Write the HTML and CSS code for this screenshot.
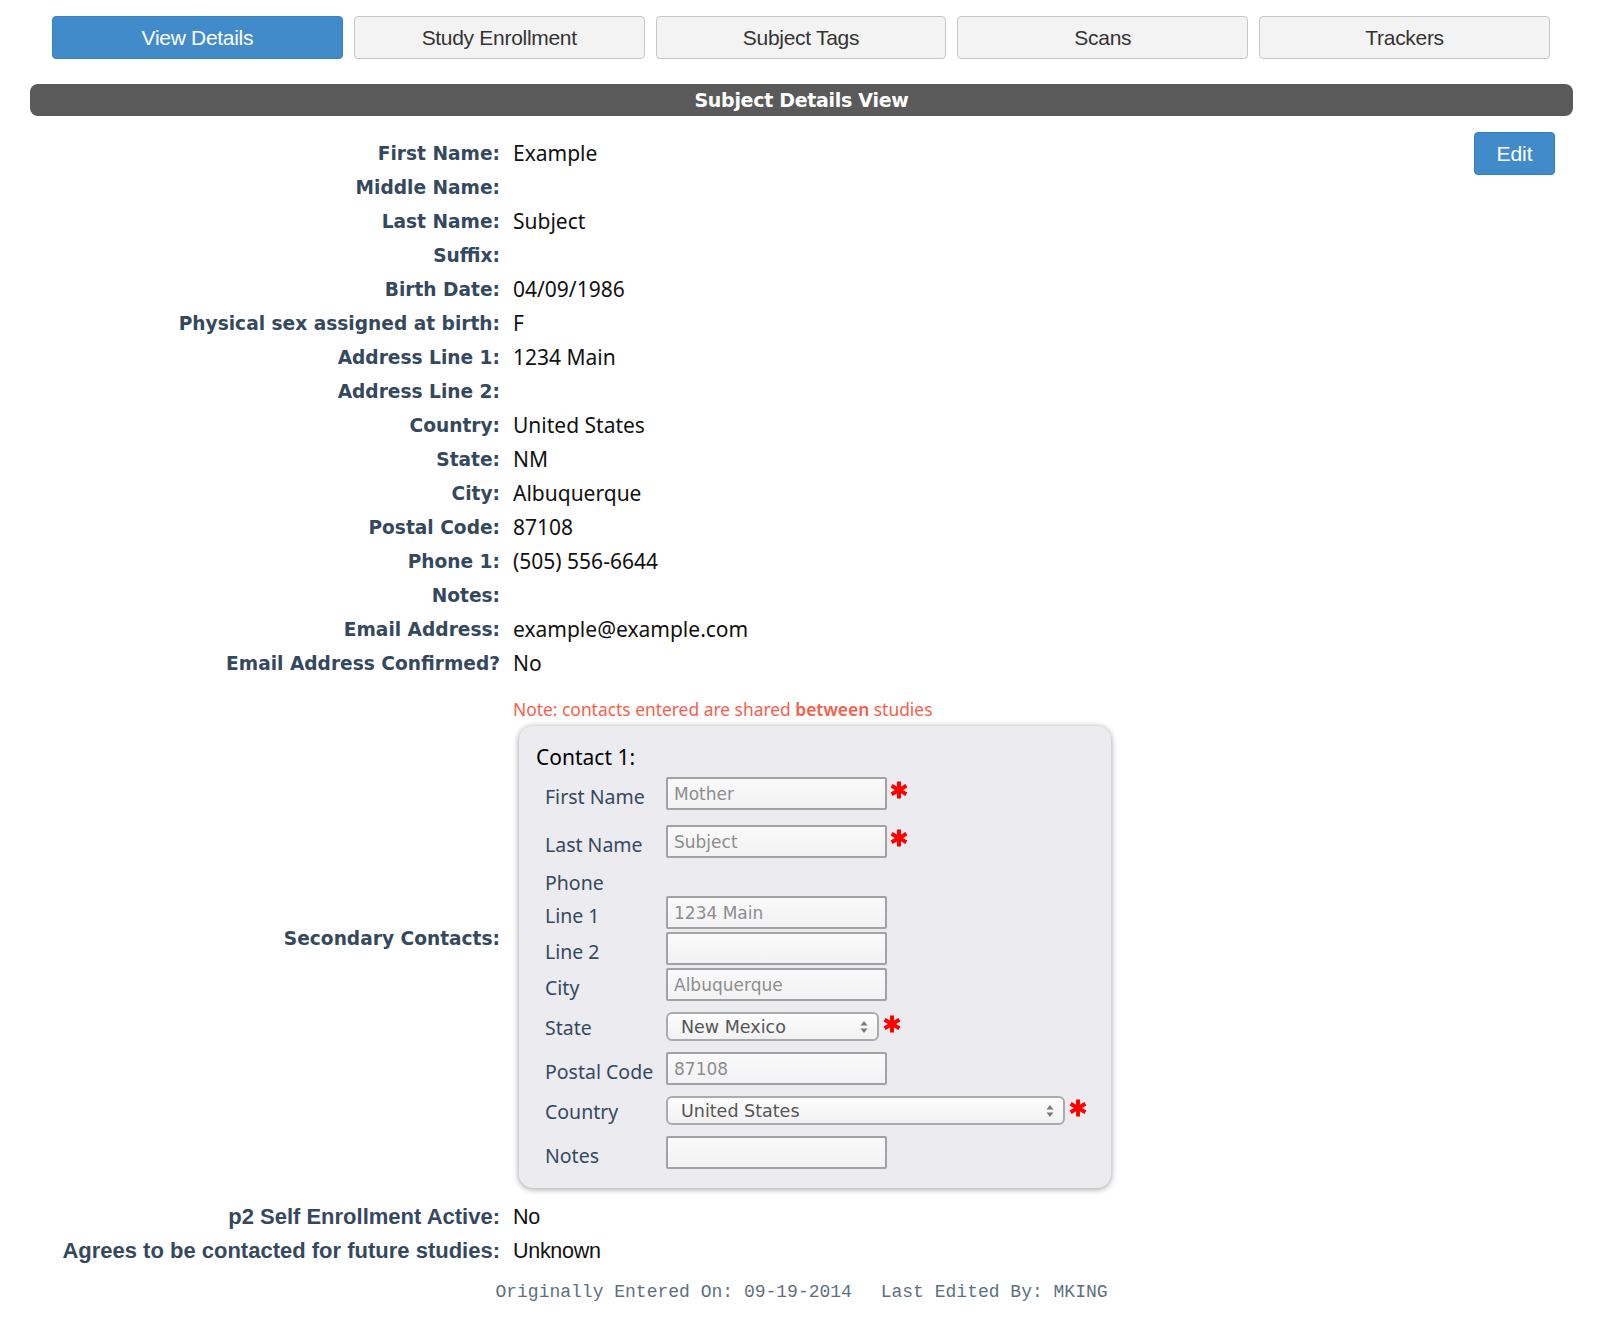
FILE: index.html
```html
<!DOCTYPE html>
<html lang="en">

<head>
    <meta charset="UTF-8">
    <meta name="viewport" content="width=device-width, initial-scale=1.0">
    <title>Subject Details</title>
    <link rel="stylesheet" href="styles.css">
</head>

<body>
<div class="page">

    <div class="tabs">
        <a href="#" class="tab active">View Details</a>
        <a href="#" class="tab">Study Enrollment</a>
        <a href="#" class="tab">Subject Tags</a>
        <a href="#" class="tab">Scans</a>
        <a href="#" class="tab">Trackers</a>
    </div>

    <div class="panel-head">Subject Details View</div>

    <div class="details">
        <dl class="fields">
            <dt>First Name:</dt><dd>Example</dd>
            <dt>Middle Name:</dt><dd></dd>
            <dt>Last Name:</dt><dd>Subject</dd>
            <dt>Suffix:</dt><dd></dd>
            <dt>Birth Date:</dt><dd>04/09/1986</dd>
            <dt>Physical sex assigned at birth:</dt><dd>F</dd>
            <dt>Address Line 1:</dt><dd>1234 Main</dd>
            <dt>Address Line 2:</dt><dd></dd>
            <dt>Country:</dt><dd>United States</dd>
            <dt>State:</dt><dd>NM</dd>
            <dt>City:</dt><dd>Albuquerque</dd>
            <dt>Postal Code:</dt><dd>87108</dd>
            <dt>Phone 1:</dt><dd>(505) 556-6644</dd>
            <dt>Notes:</dt><dd></dd>
            <dt>Email Address:</dt><dd>example@example.com</dd>
            <dt>Email Address Confirmed?</dt><dd>No</dd>

            <dt class="contacts-label">Secondary Contacts:</dt>
            <dd class="contacts">
                <p class="note">Note: contacts entered are shared <b>between</b> studies</p>
                <div class="contact">
                    <p class="contact-title">Contact 1:</p>

                    <div class="field first">
                        <label>First Name</label>
                        <input type="text" value="Mother" readonly>
                        <svg class="req" width="20" height="20" viewBox="0 0 20 20"><path d="M10 1.5v17M2.6 5.75l14.8 8.5M17.4 5.75l-14.8 8.5"/></svg>
                    </div>
                    <div class="field second">
                        <label>Last Name</label>
                        <input type="text" value="Subject" readonly>
                        <svg class="req" width="20" height="20" viewBox="0 0 20 20"><path d="M10 1.5v17M2.6 5.75l14.8 8.5M17.4 5.75l-14.8 8.5"/></svg>
                    </div>
                    <div class="field group">
                        <label>Phone</label>
                    </div>
                    <div class="field flush">
                        <label>Line 1</label>
                        <input type="text" value="1234 Main" readonly>
                    </div>
                    <div class="field tight">
                        <label>Line 2</label>
                        <input type="text" value="" readonly>
                    </div>
                    <div class="field tight">
                        <label>City</label>
                        <input type="text" value="Albuquerque" readonly>
                    </div>
                    <div class="field">
                        <label>State</label>
                        <div class="select state">
                            <span>New Mexico</span>
                            <svg width="8" height="14" viewBox="0 0 8 14"><path d="M4 1L7.5 5.5H0.5z M4 13L0.5 8.5H7.5z"/></svg>
                        </div>
                        <svg class="req sel" width="20" height="20" viewBox="0 0 20 20"><path d="M10 1.5v17M2.6 5.75l14.8 8.5M17.4 5.75l-14.8 8.5"/></svg>
                    </div>
                    <div class="field">
                        <label>Postal Code</label>
                        <input type="text" value="87108" readonly>
                    </div>
                    <div class="field">
                        <label>Country</label>
                        <div class="select country">
                            <span>United States</span>
                            <svg width="8" height="14" viewBox="0 0 8 14"><path d="M4 1L7.5 5.5H0.5z M4 13L0.5 8.5H7.5z"/></svg>
                        </div>
                        <svg class="req sel" width="20" height="20" viewBox="0 0 20 20"><path d="M10 1.5v17M2.6 5.75l14.8 8.5M17.4 5.75l-14.8 8.5"/></svg>
                    </div>
                    <div class="field">
                        <label>Notes</label>
                        <input type="text" value="" readonly>
                    </div>
                </div>
            </dd>

            <dt class="narrow">p2 Self Enrollment Active:</dt><dd class="narrow">No</dd>
            <dt class="narrow">Agrees to be contacted for future studies:</dt><dd class="narrow">Unknown</dd>
        </dl>

        <a href="#" class="btn-edit">Edit</a>
    </div>

    <p class="footer">
        <span>Originally Entered On: 09-19-2014</span>
        <span class="edited">Last Edited By: MKING</span>
    </p>

</div>
</body>

</html>
```

FILE: styles.css
```css
body {
    margin: 0;
    background: white;
}

.page {
    padding: 0 29px 0 30px;
}

/* tab bar */
.tabs {
    display: flex;
    gap: 11px;
    margin: 0 23px 0 22px;
    padding-top: 16px;
}
.tab {
    flex: 1;
    height: 41px;
    line-height: 42px;
    text-align: center;
    font-family: "Liberation Sans", Arial, sans-serif;
    font-size: 21px;
    letter-spacing: -0.3px;
    color: #333;
    text-decoration: none;
    background: #f3f3f3;
    border: 1px solid #c6c6c6;
    border-radius: 4px;
}
.tab.active {
    color: white;
    background: #428bca;
    border-color: #3a7fbe;
}

.panel-head {
    margin-top: 25px;
    height: 32px;
    line-height: 32px;
    text-align: center;
    background: #5a5a5a;
    color: white;
    border-radius: 8px;
    font-family: "DejaVu Sans", Verdana, sans-serif;
    font-weight: bold;
    font-size: 19px;
    letter-spacing: -0.3px;
}

/* details list */
.details {
    display: flex;
    align-items: flex-start;
    margin: 20px 18px 0 0;
}
.fields {
    flex: 1;
    display: grid;
    grid-template-columns: 470px 1fr;
    grid-template-rows: repeat(16, 34px) auto 34px 34px;
    column-gap: 13px;
    align-items: center;
    margin: 0;
}
.fields dt {
    text-align: right;
    font-family: "DejaVu Sans", Verdana, sans-serif;
    font-weight: bold;
    font-size: 18.6px;
    line-height: 34px;
    color: #34495e;
    padding-top: 1px;
}
.fields dd {
    margin: 0;
    font-family: "Noto Sans", sans-serif;
    font-size: 21px;
    line-height: 34px;
    color: #111;
}
.fields dt.narrow {
    font-family: "Liberation Sans", Arial, sans-serif;
    font-size: 22px;
    padding-top: 0;
}
.fields dd.narrow {
    font-family: "Liberation Sans", Arial, sans-serif;
    font-size: 21.5px;
    letter-spacing: -0.3px;
}

.btn-edit {
    margin-top: -4px;
    width: 79px;
    height: 41px;
    line-height: 42px;
    text-align: center;
    font-family: "Liberation Sans", Arial, sans-serif;
    font-size: 21px;
    color: white;
    text-decoration: none;
    background: #428bca;
    border: 1px solid #357ebd;
    border-radius: 4px;
}

/* secondary contacts */
.fields dt.contacts-label {
    align-self: center;
    margin-bottom: 4px;
}
.fields dd.contacts {
    align-self: start;
    padding: 17px 0 12px;
    line-height: normal;
}
.note {
    margin: 0 0 5px;
    font-family: "Noto Sans", sans-serif;
    font-size: 17.4px;
    line-height: 24px;
    color: #f7604a;
}
.note b {
    font-weight: 600;
}

.contact {
    width: 592px;
    box-sizing: border-box;
    margin-left: 6px;
    padding: 17px 17px 19px;
    background: #ebebf0;
    border-radius: 14px;
    box-shadow: 0 1px 6px rgba(0, 0, 0, 0.4);
}
.contact-title {
    margin: 0;
    font-family: "Noto Sans", sans-serif;
    font-size: 21px;
    line-height: 28px;
    color: #000;
}

.field {
    display: grid;
    grid-template-columns: 121px auto auto;
    justify-content: start;
    align-items: center;
    padding-left: 9px;
    margin-top: 11px;
}
.field.first { margin-top: 6px; }
.field.second { margin-top: 15px; }
.field.group { margin-top: 12px; }
.field.flush { margin-top: 0; }
.field.tight { margin-top: 3px; }

.field label {
    align-self: end;
    font-family: "Noto Sans", sans-serif;
    font-size: 19.5px;
    line-height: 26px;
    color: #34495e;
}
.field input {
    width: 221px;
    height: 33px;
    box-sizing: border-box;
    padding: 0 6px;
    font-family: "DejaVu Sans", Verdana, sans-serif;
    font-size: 17px;
    color: #8d8d8d;
    background: linear-gradient(#fafafa, #f2f2f4);
    border: 2px solid #a2a2a2;
    border-radius: 2px;
    outline: none;
}

.select {
    display: flex;
    align-items: center;
    justify-content: space-between;
    height: 29px;
    box-sizing: border-box;
    padding: 0 9px 0 13px;
    font-family: "DejaVu Sans", Verdana, sans-serif;
    font-size: 17.5px;
    color: #555;
    background: linear-gradient(#fdfdfd, #f1f1f3);
    border: 2px solid #ababab;
    border-radius: 6px;
}
.select svg {
    fill: #7a7a7a;
}
.select.state { width: 213px; }
.select.country { width: 399px; }

.req {
    margin-left: 2px;
    margin-bottom: 8px;
    stroke: #f00;
    stroke-width: 4;
    fill: none;
}
.req.sel {
    margin-left: 3px;
    margin-bottom: 6px;
}

.footer {
    margin: 12px 0 0;
    text-align: center;
    font-family: "Liberation Mono", "Courier New", monospace;
    font-size: 18px;
    line-height: 24px;
    color: #5d7080;
}
.footer .edited {
    margin-left: 18px;
}
```
